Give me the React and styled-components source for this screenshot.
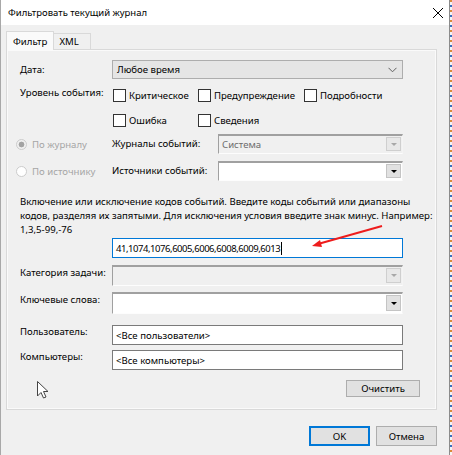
import React from 'react'
import styled, { createGlobalStyle } from 'styled-components'

const GlobalStyle = createGlobalStyle`
  html, body {
    margin: 0;
    padding: 0;
  }
  body {
    width: 452px;
    height: 455px;
    overflow: hidden;
    background: #f2f2f2;
    font-family: "Noto Sans", "Liberation Sans", sans-serif;
    font-size: 9.6px;
    color: #000;
  }
`

const Desktop = styled.div`
  display: flex;
  height: 455px;
`

const Window = styled.div`
  position: relative;
  width: 448px;
  height: 455px;
  background: #f0f0f0;
  border-left: 1px solid #a8a8a8;
  border-right: 1px solid #8c8c8c;
  display: flex;
  flex-direction: column;
`

const Strip = styled.div`
  flex: 1;
  background: repeating-linear-gradient(180deg, #d98a3a 0 2px, #f4f4f4 2px 5px, #3a6fc0 5px 7px, #f4f4f4 7px 10px);
`

const TitleBar = styled.div`
  flex: none;
  height: 25px;
  background: #fff;
  display: flex;
  align-items: center;
  justify-content: space-between;
  padding: 0 4px 0 7px;
`

const Title = styled.span`
  font-size: 9.5px;
  color: #000;
`

const Content = styled.div`
  padding: 0 12px 0 5px;
  display: flex;
  flex-direction: column;
`

const TabStrip = styled.div`
  flex: none;
  display: flex;
  align-items: flex-end;
  height: 24px;
`

const Tab = styled.div`
  height: ${p => (p.$active ? '19px' : '16px')};
  padding: 0 ${p => (p.$active ? '6px' : '5px')};
  box-sizing: border-box;
  display: flex;
  align-items: center;
  background: ${p => (p.$active ? '#fafafa' : '#f0f0f0')};
  border: 1px solid #d9d9d9;
  border-bottom: none;
  border-left: ${p => (p.$active ? '1px solid #d9d9d9' : 'none')};
  margin-bottom: ${p => (p.$active ? '-1px' : '0')};
  position: relative;
  z-index: ${p => (p.$active ? 1 : 0)};
  min-width: ${p => p.$min || 0}px;
`

const Panel = styled.div`
  border: 1px solid #d9d9d9;
  box-shadow: inset 0 0 0 1px #fafafa;
  padding: 0 33px 12px 13px;
  display: flex;
  flex-direction: column;
`

const Row = styled.div`
  flex: none;
  display: flex;
  align-items: ${p => p.$align || 'center'};
  margin-top: ${p => p.$mt || 0}px;
  height: ${p => p.$h}px;
`

const Label = styled.div`
  width: ${p => p.$w || 92}px;
  flex: none;
  align-self: ${p => (p.$top ? 'flex-start' : 'center')};
  padding-top: ${p => p.$pt || 0}px;
  line-height: 14px;
  white-space: nowrap;
`

const Dropdown = styled.div`
  flex: 1;
  height: 100%;
  box-sizing: border-box;
  background: #e5e5e5;
  border: 1px solid #adadad;
  display: flex;
  align-items: center;
  justify-content: space-between;
  padding: 0 5px 0 4px;
`

const Combo = styled.div`
  flex: 1;
  height: 100%;
  box-sizing: border-box;
  background: ${p => (p.$disabled ? '#f0f0f0' : '#fff')};
  color: ${p => (p.$disabled ? '#6d6d6d' : '#000')};
  border-style: solid;
  border-width: 2px 1px 1px 1px;
  border-color: #a0a0a0 #f4f4f4 #fdfdfd #a0a0a0;
  display: flex;
  align-items: stretch;
  justify-content: space-between;
  padding: 1px 1px 2px 3px;
`

const ComboText = styled.span`
  align-self: center;
`

const ComboButton = styled.div`
  width: 15px;
  box-sizing: border-box;
  background: ${p => (p.$disabled ? '#e8e8e8' : '#e1e1e1')};
  border: 1px solid ${p => (p.$disabled ? '#cfcfcf' : '#c4c4c4')};
  display: flex;
  align-items: center;
  justify-content: center;
`

const Triangle = styled.span`
  width: 0;
  height: 0;
  border-left: 3px solid transparent;
  border-right: 3px solid transparent;
  border-top: 3px solid ${p => (p.$disabled ? '#a8a8a8' : '#000')};
`

const TextBox = styled.div`
  flex: 1;
  height: 100%;
  box-sizing: border-box;
  background: #fff;
  border: 1px solid ${p => (p.$focused ? '#0078d7' : '#7a7a7a')};
  display: flex;
  align-items: center;
  padding: 0 3px;
  white-space: nowrap;
  letter-spacing: ${p => (p.$digits ? '-0.45px' : '0')};
  font-size: ${p => (p.$digits ? '9.5px' : '9.6px')};
`

const Caret = styled.span`
  display: inline-block;
  width: 1px;
  height: 13px;
  background: #000;
  margin-left: 1px;
`

const CheckGrid = styled.div`
  display: grid;
  grid-template-columns: 85px 106px auto;
  grid-auto-rows: 22px;
  row-gap: 3px;
  padding-left: 1px;
`

const Check = styled.label`
  display: flex;
  align-items: center;
  gap: 3px;
  white-space: nowrap;
`

const Box = styled.span`
  width: 13px;
  height: 13px;
  box-sizing: border-box;
  border: 1px solid #333;
  background: #fff;
  flex: none;
`

const RadioWrap = styled.div`
  width: 96px;
  margin-left: -4px;
  flex: none;
  display: flex;
  align-items: center;
  gap: 5px;
  color: #a6a6a6;
  white-space: nowrap;
`

const RadioDot = styled.span`
  width: 11px;
  height: 11px;
  box-sizing: border-box;
  border-radius: 50%;
  border: 1px solid #cccccc;
  background: ${p => (p.$checked ? 'radial-gradient(circle, #a3a3a3 0 2.6px, #f0f0f0 3.2px)' : '#fff')};
  flex: none;
`

const Description = styled.p`
  flex: none;
  margin: 14px 0 0;
  line-height: 14px;
  white-space: nowrap;
`

const ButtonRow = styled.div`
  flex: none;
  display: flex;
  justify-content: flex-end;
  gap: ${p => p.$gap || 0}px;
  margin-top: ${p => p.$mt || 0}px;
  margin-right: ${p => p.$mr || 0}px;
`

const Button = styled.button`
  width: ${p => p.$w}px;
  height: ${p => p.$h}px;
  box-sizing: border-box;
  background: #e1e1e1;
  border: 1px solid ${p => (p.$default ? '#0078d7' : '#adadad')};
  box-shadow: ${p => (p.$default ? 'inset 0 0 0 1px #0078d7' : 'none')};
  font: inherit;
  color: #000;
  padding: 0;
`

const Overlay = styled.svg`
  position: absolute;
  left: -1px;
  top: 0;
  pointer-events: none;
`

const CloseIcon = () => (
  <svg width="14" height="14" viewBox="0 0 14 14">
    <path d="M2 2 L12 12 M12 2 L2 12" stroke="#000" strokeWidth="1" />
  </svg>
)

const Chevron = () => (
  <svg width="9" height="6" viewBox="0 0 9 6">
    <path d="M0.5 0.8 L4.5 4.8 L8.5 0.8" stroke="#606060" strokeWidth="1" fill="none" />
  </svg>
)

const ComboField = ({ value, disabled }) => (
  <Combo $disabled={disabled}>
    <ComboText>{value}</ComboText>
    <ComboButton $disabled={disabled}>
      <Triangle $disabled={disabled} />
    </ComboButton>
  </Combo>
)

export default function App() {
  return (
    <>
      <GlobalStyle />
      <Desktop>
        <Window>
          <TitleBar>
            <Title>Фильтровать текущий журнал</Title>
            <CloseIcon />
          </TitleBar>
          <Content>
            <TabStrip>
              <Tab $active $min={46}>Фильтр</Tab>
              <Tab $min={37}>XML</Tab>
            </TabStrip>
            <Panel>
              <Row $mt={10} $h={19}>
                <Label>Дата:</Label>
                <Dropdown>
                  <span>Любое время</span>
                  <Chevron />
                </Dropdown>
              </Row>

              <Row $mt={5} $h={47} $align="flex-start">
                <Label $top $pt={2}>Уровень события:</Label>
                <CheckGrid>
                  <Check><Box />Критическое</Check>
                  <Check><Box />Предупреждение</Check>
                  <Check><Box />Подробности</Check>
                  <Check><Box />Ошибка</Check>
                  <Check><Box />Сведения</Check>
                </CheckGrid>
              </Row>

              <Row $mt={3} $h={20}>
                <RadioWrap><RadioDot $checked />По журналу</RadioWrap>
                <Label $w={106}>Журналы событий:</Label>
                <ComboField value="Система" disabled />
              </Row>

              <Row $mt={7} $h={20}>
                <RadioWrap><RadioDot />По источнику</RadioWrap>
                <Label $w={106}>Источники событий:</Label>
                <ComboField value="" />
              </Row>

              <Description>
                Включение или исключение кодов событий. Введите коды событий или диапазоны
                <br />
                кодов, разделяя их запятыми. Для исключения условия введите знак минус. Например:
                <br />
                1,3,5-99,-76
              </Description>

              <Row $mt={1} $h={20}>
                <Label />
                <TextBox $focused $digits>
                  41,1074,1076,6005,6006,6008,6009,6013<Caret />
                </TextBox>
              </Row>

              <Row $mt={7} $h={21}>
                <Label $top $pt={1}>Категория задачи:</Label>
                <ComboField value="" disabled />
              </Row>

              <Row $mt={6} $h={22}>
                <Label $top $pt={1}>Ключевые слова:</Label>
                <ComboField value="" />
              </Row>

              <Row $mt={11} $h={20}>
                <Label $top>Пользователь:</Label>
                <TextBox>&lt;Все пользователи&gt;</TextBox>
              </Row>

              <Row $mt={5} $h={20}>
                <Label $top>Компьютеры:</Label>
                <TextBox>&lt;Все компьютеры&gt;</TextBox>
              </Row>

              <ButtonRow $mt={10} $mr={-17}>
                <Button $w={74} $h={17}>Очистить</Button>
              </ButtonRow>
            </Panel>

            <ButtonRow $mt={16} $gap={6}>
              <Button $w={61} $h={20} $default>OK</Button>
              <Button $w={61} $h={20}>Отмена</Button>
            </ButtonRow>
          </Content>

          <Overlay width="452" height="455" viewBox="0 0 452 455">
            <path d="M382 226 L318 244" stroke="#ee1c1c" strokeWidth="2" fill="none" />
            <path d="M312 246 L320 240 L322 247 Z" fill="#ee1c1c" />
            <path
              d="M37.5 381.5 L37.5 396 L41 392.5 L43.5 398 L46 397 L43.5 391.5 L48 391.5 Z"
              fill="#fff"
              stroke="#444"
              strokeWidth="1"
              strokeLinejoin="round"
            />
          </Overlay>
        </Window>
        <Strip />
      </Desktop>
    </>
  )
}
